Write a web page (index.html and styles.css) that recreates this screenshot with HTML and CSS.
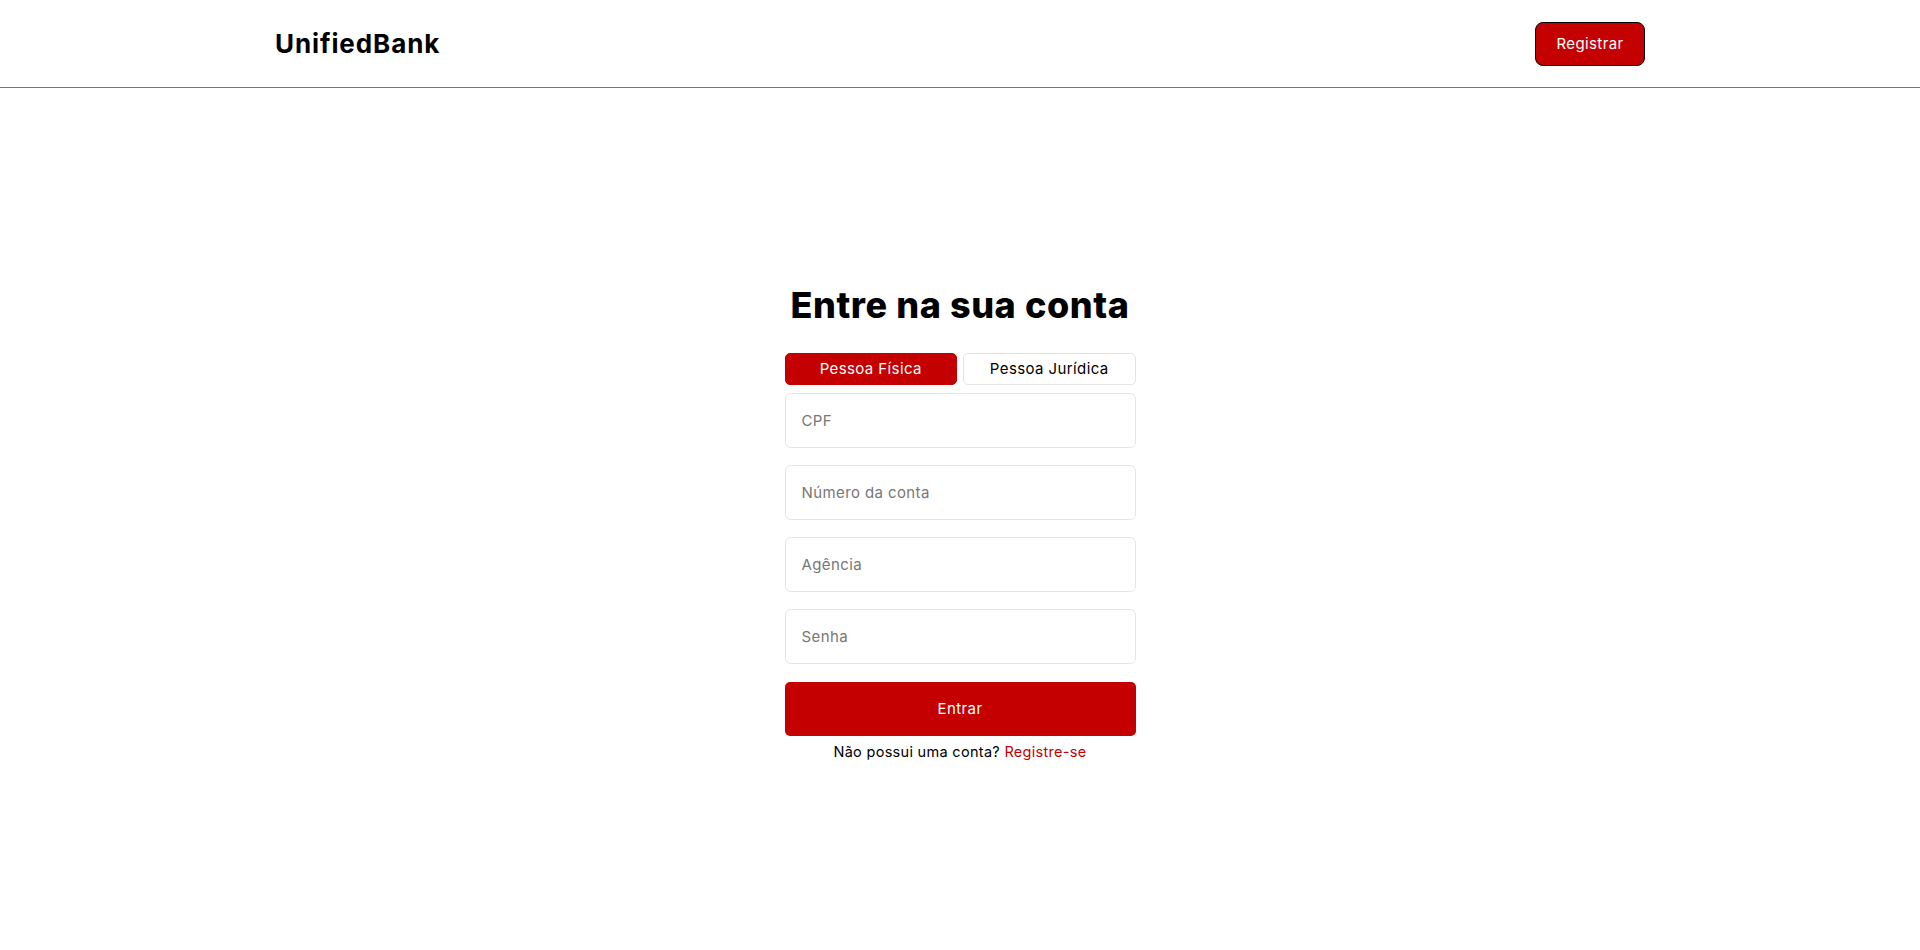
FILE: index.html
```html
<!DOCTYPE html>
<html lang="pt-BR">
<head>
<meta charset="utf-8">
<title>UnifiedBank</title>
<link rel="stylesheet" href="styles.css">
</head>
<body>
<header class="topbar">
  <div class="topbar-inner">
    <a class="logo" href="#">UnifiedBank</a>
    <button class="btn-register" type="button">Registrar</button>
  </div>
</header>
<main class="main">
  <form class="login">
    <h1 class="title">Entre na sua conta</h1>
    <div class="tabs">
      <button type="button" class="tab tab-active">Pessoa Física</button>
      <button type="button" class="tab">Pessoa Jurídica</button>
    </div>
    <input class="field" type="text" placeholder="CPF">
    <input class="field" type="text" placeholder="Número da conta">
    <input class="field" type="text" placeholder="Agência">
    <input class="field" type="password" placeholder="Senha">
    <button class="btn-submit" type="button">Entrar</button>
    <p class="signup">Não possui uma conta? <a href="#">Registre-se</a></p>
  </form>
</main>
</body>
</html>
```
FILE: styles.css
```css
* { box-sizing: border-box; }
html, body { margin: 0; padding: 0; }
body {
  font-family: "Inter", "Open Sans", sans-serif;
  background: #fff;
  color: #000;
}
.topbar {
  height: 88px;
  border-bottom: 1px solid #777;
}
.topbar-inner {
  width: 1370px;
  margin: 0 auto;
  height: 87px;
  display: flex;
  align-items: center;
  justify-content: space-between;
}
.logo {
  font-size: 26px;
  font-weight: 700;
  color: #000;
  text-decoration: none;
  letter-spacing: 0.9px;
}
.btn-register {
  width: 110px;
  height: 44px;
  background: #c40000;
  color: #fff;
  border: 1px solid #000;
  border-radius: 8px;
  font-family: inherit;
  font-size: 15px;
  letter-spacing: 0.4px;
  cursor: pointer;
}
.main {
  height: 862px;
  display: flex;
  align-items: center;
  justify-content: center;
}
.login {
  width: 351px;
  display: flex;
  flex-direction: column;
  align-items: stretch;
  margin-top: 6px;
}
.title {
  margin: 0 0 26px;
  font-size: 36px;
  font-weight: 800;
  line-height: 44px;
  text-align: center;
  letter-spacing: 0.6px;
}
.tabs {
  display: flex;
  gap: 6px;
  margin-bottom: 8px;
}
.tab {
  flex: 1;
  height: 32px;
  border: 1px solid #e3e3e3;
  border-radius: 5px;
  background: #fff;
  color: #000;
  font-family: inherit;
  font-size: 15px;
  letter-spacing: 0.4px;
  cursor: pointer;
}
.tab-active {
  background: #c40000;
  border-color: #c40000;
  color: #fff;
}
.field {
  height: 55px;
  border: 1px solid #e5e5e5;
  border-radius: 6px;
  padding: 0 16px;
  font-family: inherit;
  font-size: 15px;
  letter-spacing: 0.4px;
  margin-bottom: 17px;
  outline: none;
}
.field::placeholder { color: #777; }
.btn-submit {
  height: 54px;
  margin-top: 1px;
  border: none;
  border-radius: 5px;
  background: #c40000;
  color: #fff;
  font-family: inherit;
  font-size: 15px;
  letter-spacing: 0.4px;
  cursor: pointer;
}
.signup {
  margin: 6px 0 0;
  text-align: center;
  font-size: 14.5px;
  line-height: 20px;
  letter-spacing: 0.3px;
}
.signup a {
  color: #c40000;
  text-decoration: none;
}
```
